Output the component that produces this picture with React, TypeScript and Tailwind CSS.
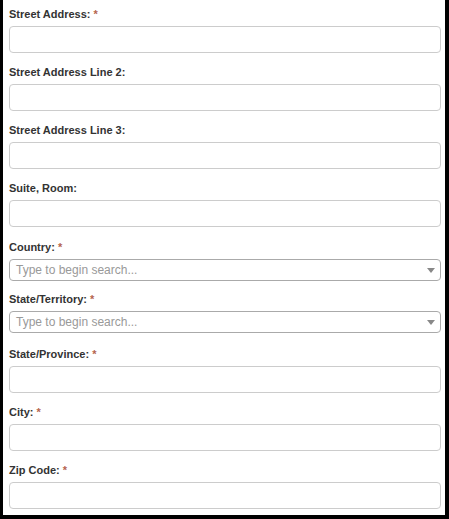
import React from "react";

const Label = ({ text, req }: { text: string; req?: boolean }) => (
  <label className="block text-[11px] leading-[17px] font-bold text-[#333] mb-[3px]">
    {text}
    {req && <span className="text-[#b5644f]"> *</span>}
  </label>
);

const TextField = ({ label, req, mb }: { label: string; req?: boolean; mb: string }) => (
  <div className={mb}>
    <Label text={label} req={req} />
    <input
      type="text"
      className="block w-full h-[27px] border border-[#ccc] rounded-[4px] bg-white outline-none"
    />
  </div>
);

const SelectField = ({ label, req, mb }: { label: string; req?: boolean; mb: string }) => (
  <div className={mb}>
    <Label text={label} req={req} />
    <div className="flex items-center justify-between h-[22px] border border-[#aaa] rounded-[4px] bg-white pl-[6px] pr-[4px]">
      <span className="text-[12px] text-[#999]">Type to begin search...</span>
      <svg width="8" height="5" viewBox="0 0 8 5" className="mr-[1px]">
        <polygon points="0,0 8,0 4,5" fill="#888" />
      </svg>
    </div>
  </div>
);

export default function App() {
  return (
    <div
      className="w-[449px] h-[519px] bg-white border-l-[3px] border-r-[4px] border-b-[4px] border-black pl-[6px] pr-[4px] pt-[6px] overflow-hidden"
      style={{ fontFamily: '"Liberation Sans", Arial, sans-serif' }}
    >
      <TextField label="Street Address:" req mb="mb-[11px]" />
      <TextField label="Street Address Line 2:" mb="mb-[11px]" />
      <TextField label="Street Address Line 3:" mb="mb-[11px]" />
      <TextField label="Suite, Room:" mb="mb-[12px]" />
      <SelectField label="Country:" req mb="mb-[10px]" />
      <SelectField label="State/Territory:" req mb="mb-[13px]" />
      <TextField label="State/Province:" req mb="mb-[11px]" />
      <TextField label="City:" req mb="mb-[11px]" />
      <TextField label="Zip Code:" req mb="mb-[11px]" />
    </div>
  );
}
